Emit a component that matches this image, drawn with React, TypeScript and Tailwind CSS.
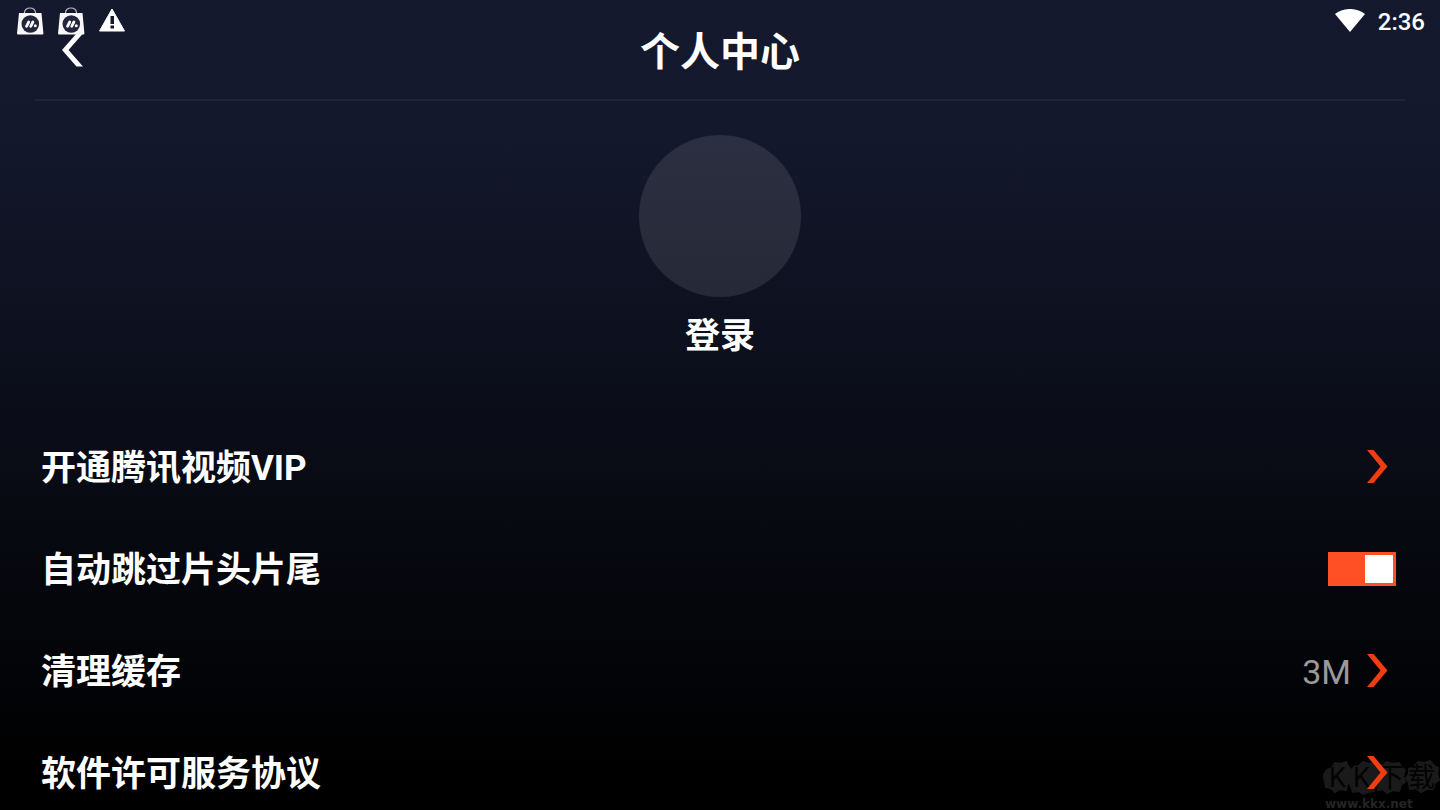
import React, { useState } from 'react';

interface RowProps {
  label: string;
  value?: string;
}

const BagIcon = () => (
  <svg viewBox="0 0 28 28" className="w-7 h-7" aria-hidden="true">
    <path d="M8.5 7V5.5a5.5 4.5 0 0 1 11 0V7" fill="none" stroke="#b9bbc6" strokeWidth="1.2" />
    <path d="M3 6h22.5l1.9 20.5q0 1-1 1H2q-1 0-1-1z" fill="#f8f8fa" />
    <circle cx="14.3" cy="17" r="8.8" fill="#23263a" />
    <path d="M10.500 19.300l2.200-4.300M14.700 19.300l2.200-4.300" stroke="#f8f8fa" strokeWidth="2.8" strokeLinecap="round" />
    <circle cx="19.3" cy="18.8" r="1.5" fill="#f8f8fa" />
  </svg>
);

const WarningIcon = () => (
  <svg viewBox="0 0 28 28" className="w-7 h-7" aria-hidden="true">
    <path d="M14 2l12.5 22h-25z" fill="#fff" stroke="#fff" strokeWidth="1" strokeLinejoin="round" />
    <path d="M12.5 9h3.500v8h-3.500zM12.500 18.500h3.500v3h-3.500z" fill="#15182d" />
  </svg>
);

const WifiIcon = () => (
  <svg viewBox="0 0 30 24" className="w-[30px] h-6" aria-hidden="true">
    <path d="M0 5C8-1.700 22-1.700 30 5L15 23z" fill="#fff" />
  </svg>
);

const ChevronRight = () => (
  <svg viewBox="0 0 22 34" className="w-[22px] h-[34px]" aria-hidden="true">
    <path d="M0 0h6.500L20.500 16.500 6.500 33H0l13.500-16.500z" fill="#f23c12" />
  </svg>
);

const StatusBar = () => (
  <div className="absolute inset-x-0 top-0 flex h-[42px] items-center justify-between pl-4 pr-[15px] pointer-events-none">
    <div className="flex items-center gap-[13px]">
      <BagIcon />
      <BagIcon />
      <WarningIcon />
    </div>
    <div className="flex items-center gap-[13px]">
      <WifiIcon />
      <span className="pt-[2px] font-[Roboto] text-2xl leading-7 font-medium">2:36</span>
    </div>
  </div>
);

const LinkRow = ({ label, value }: RowProps) => (
  <li>
    <a href="#" className="flex h-[102px] items-center justify-between pl-[41px] pr-[51px]">
      <span className="pt-1 font-bold">{label}</span>
      <span className="flex items-center gap-4">
        {value && <span className="pt-[2px] text-[34px] text-[#9a9a9c]">{value}</span>}
        <ChevronRight />
      </span>
    </a>
  </li>
);

const Watermark = () => (
  <div className="absolute bottom-0 right-0 flex w-[117px] flex-col pointer-events-none">
    <svg viewBox="0 0 117 40" className="w-[117px] h-10" fontSize="27" fill="#030303">
      <path
        d="M4 12l5-2 3-5 6 1 5-2 2 4 3 4-3 5 2 6-3 3-1 6-6-1-5 3-4-4-5-1-1-6-2-5zM27 14l4-5 5-1 4-4 6 2 6-1 1 5 4 4-3 6 2 5-4 3-1 5-6 1-5 2-4-3-6 1-2-6-3-4zM55 9l5-1 3-4 7 2 6-1 2 4 4 3-2 6 2 6-4 3-2 6-6-1-6 3-4-4-5 1-2-7-3-5 3-5zM86 11l5-2 4-5 7 1 5-2 4 5 4 2-1 6 2 6-4 3-2 6-6 0-6 3-5-4-6 1-1-6-3-5 3-4z"
        fill="#1a1a1a"
        stroke="#1a1a1a"
        strokeWidth="2"
        strokeLinejoin="round"
      />
      <text x="6" y="29">K</text>
      <text x="30" y="29">K</text>
      <text x="54" y="29">下</text>
      <text x="85" y="29">载</text>
    </svg>
    <span className="pl-[2px] font-['DejaVu_Sans'] text-xs leading-3 font-bold text-[#242424]">www.kkx.net</span>
  </div>
);

const App = () => {
  const [skipIntro, setSkipIntro] = useState(true);

  return (
    <div className="relative flex h-screen flex-col overflow-hidden bg-[linear-gradient(to_bottom,#14192e_0%,#13182c_16%,#000_96%)] font-[Roboto,'Noto_Sans_CJK_SC',sans-serif] text-white">
      <header className="mx-[35px] grid h-[101px] shrink-0 grid-cols-[1fr_auto_1fr] items-center border-b-2 border-[#1f2439]">
        <button type="button" aria-label="返回" className="ml-[26px] justify-self-start">
          <svg viewBox="0 0 22 34" className="w-[22px] h-[34px]" aria-hidden="true">
            <path d="M22 0.5h-6.500L1 17l14.500 16.500H22L7.500 17z" fill="#fff" />
          </svg>
        </button>
        <h1 className="pt-[6px] text-[40px] leading-[60px] font-bold">个人中心</h1>
      </header>

      <Watermark />

      <main className="relative flex-1 overflow-y-auto [scrollbar-width:none] text-[35px] leading-[52px]">
        <section className="flex h-[315px] flex-col items-center pt-[34px]">
          <button type="button" className="flex flex-col items-center gap-[14px]">
            <span className="size-[162px] rounded-full bg-white/10" />
            <span className="font-bold">登录</span>
          </button>
        </section>

        <ul>
          <LinkRow label="开通腾讯视频VIP" />
          <li>
            <label className="flex h-[102px] items-center justify-between pl-[41px] pr-11">
              <span className="pt-1 font-bold">自动跳过片头片尾</span>
              <input
                type="checkbox"
                role="switch"
                checked={skipIntro}
                onChange={(e) => setSkipIntro(e.target.checked)}
                className="flex h-[34px] w-[68px] appearance-none items-center bg-neutral-600 px-[3px] before:size-7 before:bg-white checked:justify-end checked:bg-[#ff4f25]"
              />
            </label>
          </li>
          <LinkRow label="清理缓存" value="3M" />
          <LinkRow label="软件许可服务协议" />
        </ul>
      </main>

      <StatusBar />
    </div>
  );
};

export default App;
